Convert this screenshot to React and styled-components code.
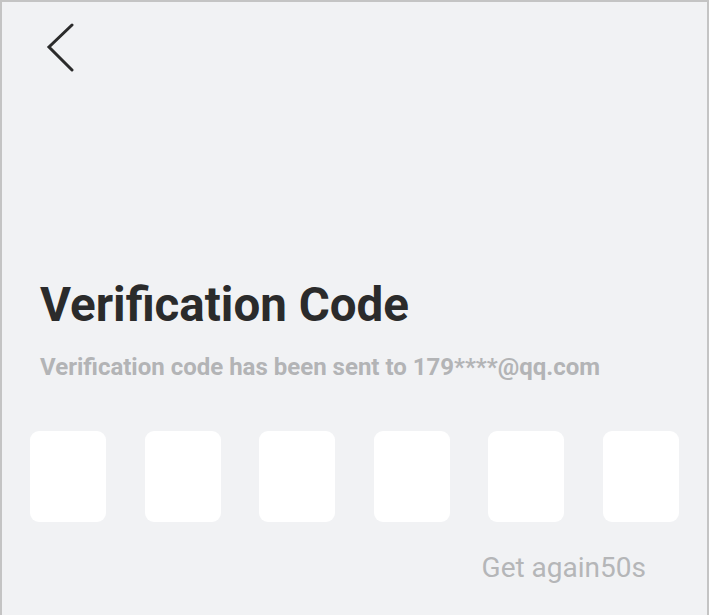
import React from "react";
import styled, { createGlobalStyle } from "styled-components";

const Global = createGlobalStyle`
  html, body { margin: 0; padding: 0; background: #f1f2f4; }
  body { font-family: Roboto, "Liberation Sans", sans-serif; }
`;

const Screen = styled.div`
  box-sizing: border-box;
  width: 709px;
  height: 615px;
  background: #f1f2f4;
  border-top: 2px solid #c4c4c4;
  border-left: 2px solid #c4c4c4;
  border-right: 2px solid #c4c4c4;
  display: flex;
  flex-direction: column;
`;

const TopBar = styled.div`
  height: 88px;
  display: flex;
  align-items: flex-start;
  padding: 21px 0 0 44px;
  box-sizing: border-box;
`;

const BackButton = styled.button`
  border: 0;
  background: none;
  padding: 0;
  width: 30px;
  height: 50px;
  cursor: pointer;
  display: flex;
`;

const Heading = styled.div`
  padding: 188px 0 0 38px;
  display: flex;
  flex-direction: column;
`;

const Title = styled.h1`
  margin: 0;
  font-size: 47.5px;
  font-weight: 700;
  color: #2b2b2b;
  line-height: 54px;
  letter-spacing: 0;
`;

const Subtitle = styled.p`
  margin: 21px 0 0;
  font-size: 24px;
  font-weight: 700;
  color: #b3b4b6;
  line-height: 28px;
`;

const CodeRow = styled.div`
  margin-top: 50px;
  padding: 0 28px;
  display: flex;
  justify-content: space-between;
`;

const CodeBox = styled.div`
  width: 76px;
  height: 91px;
  background: #ffffff;
  border-radius: 9px;
`;

const Resend = styled.div`
  margin-top: 30px;
  padding-right: 61px;
  text-align: right;
  font-size: 28px;
  font-weight: 400;
  color: #b5b6b8;
  line-height: 32px;
`;

export default function App() {
  return (
    <>
      <Global />
      <Screen>
        <TopBar>
          <BackButton aria-label="back">
            <svg width="30" height="50" viewBox="0 0 30 50">
              <polyline
                points="26,2 3,24 26,47"
                fill="none"
                stroke="#2b2b2b"
                strokeWidth="3"
                strokeLinecap="round"
                strokeLinejoin="miter"
              />
            </svg>
          </BackButton>
        </TopBar>
        <Heading>
          <Title>Verification Code</Title>
          <Subtitle>Verification code has been sent to 179****@qq.com</Subtitle>
        </Heading>
        <CodeRow>
          {[0, 1, 2, 3, 4, 5].map((i) => (
            <CodeBox key={i} />
          ))}
        </CodeRow>
        <Resend>Get again50s</Resend>
      </Screen>
    </>
  );
}
